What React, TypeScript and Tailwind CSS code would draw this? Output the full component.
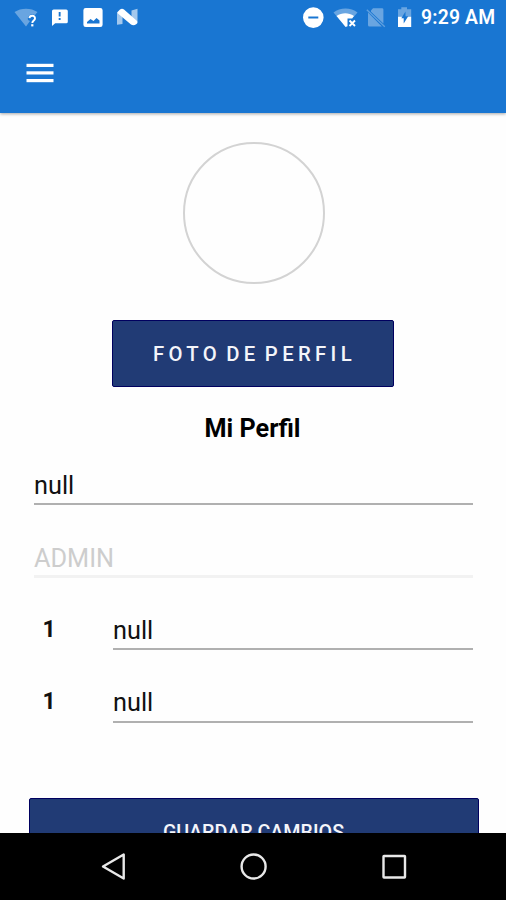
import React from 'react';

interface FieldProps {
  value: string;
  label?: string;
  disabled?: boolean;
}

const Field: React.FC<FieldProps> = ({ value, label, disabled }) => {
  return (
    <div className="flex h-[72.5px] w-full">
      {label && (
        <span className="w-[79px] shrink-0 pl-[9px] pt-[12.6px] text-[23px] leading-[28px] font-bold text-[#111]">
          {label}
        </span>
      )}
      <div
        className={
          disabled
            ? 'h-[47px] flex-1 border-b-[3px] border-[#f2f2f2] pl-[0.5px] pt-[13px] text-[25.3px] leading-[30px] text-[#cdcdcd]'
            : 'h-[47px] flex-1 border-b-2 border-[#b0b0b0] pl-[0.5px] pt-[12.9px] text-[25.3px] leading-[30px] text-[#111]'
        }
      >
        {value}
      </div>
    </div>
  );
};

const StatusBar: React.FC = () => {
  return (
    <div className="flex h-[36px] items-center justify-between">
      <svg width="146" height="36" viewBox="0 0 146 36" fill="#fff">
        <path d="M14.5 12C21 7.500 31 7.500 37.500 12L35 15C31 13 27 16 28 20L30 21L26 26.500Z" opacity=".35" />
        <path
          d="M29.400 18.200C29.800 14.800 35.200 15 35 18.600C34.900 20.400 32.300 20.700 32.300 23"
          fill="none"
          stroke="#fff"
          strokeWidth="1.900"
        />
        <rect x="31.200" y="24.200" width="2.200" height="2.200" />
        <path
          fillRule="evenodd"
          d="M53.700 9.500H66.200Q67.800 9.500 67.800 11.100V21.700Q67.800 23.200 66.200 23.200H55.200L52 26V11.100Q52 9.500 53.700 9.500ZM58.700 12V16.400H60.600V12ZM58.700 18V19.900H60.600V18Z"
        />
        <path
          fillRule="evenodd"
          d="M85.700 8H100.300Q102.600 8 102.600 10.300V24.700Q102.600 27 100.300 27H85.700Q83.400 27 83.400 24.700V10.300Q83.400 8 85.700 8ZM87 23.500H99.500V20.500L96.500 18L93.500 21L90.500 19L87 22Z"
        />
        <path d="M117 12V24.800L122.500 24V15ZM137.500 8.800L131.500 10.500V19L137.500 22Z" opacity=".6" />
        <path d="M117.500 12L120 9.500Q122 8 124 9.500L136.500 20.500Q138.500 22.500 136.500 24Q133.500 26.300 131 24.500L118.500 14Q117 12.800 117.500 12Z" />
      </svg>
      <div className="flex items-center pr-[11px]">
        <svg width="114" height="36" viewBox="300 0 114 36" fill="#fff">
          <path
            fillRule="evenodd"
            d="M313.300 7.300a10.300 10.300 0 1 0 0 20.600a10.300 10.300 0 1 0 0-20.600ZM308.300 16.400H318.300V18.500H308.300Z"
          />
          <path d="M333.500 12.500C340 7 351 7 357.500 12.500L354 16.500H337Z" opacity=".35" />
          <path d="M336.500 16C342 12.200 348.500 12.200 354 16L352.200 18.400H347.500V26.200L345.600 27Z" />
          <path d="M349.500 20.500L355 26M355 20.500L349.500 26" stroke="#fff" strokeWidth="1.900" />
          <path d="M371 10.500L373 8.200H382Q383.400 8.200 383.400 9.600V23.500L371 11.800ZM368 12.500L381.800 26.500H369.500Q368 26.500 368 25Z" opacity=".35" />
          <path d="M366.800 9.800L384.800 26.700" stroke="#fff" strokeWidth="1.400" opacity=".3" />
          <path d="M401.300 7.300H407V9.200H411.200V17H398V9.200H401.300Z" opacity=".35" />
          <path d="M398 16.800H411.200V27H398Z" />
          <path d="M405.500 11.500V16.200H408.200L403.700 23.500V18.300H401.300Z" fill="#1976d2" />
        </svg>
        <span className="ml-[7px] w-[74px] whitespace-nowrap text-[19.3px] leading-[38px] font-semibold tracking-[0.2px] text-white">
          9:29 AM
        </span>
      </div>
    </div>
  );
};

const App: React.FC = () => {
  return (
    <main className="flex h-[900px] w-[506px] flex-col overflow-hidden bg-[#fefefe] font-['Roboto',sans-serif]">
      <header className="z-10 h-[113px] shrink-0 bg-[#1976d2] shadow-[0_1px_3px_rgba(0,0,0,0.35)]">
        <StatusBar />
        <button className="ml-[26px] mt-[27px] block">
          <svg width="28" height="20" viewBox="0 0 28 20" fill="#fff">
            <rect x="0.500" y="0.800" width="27" height="3.200" />
            <rect x="0.500" y="8.300" width="27" height="3.200" />
            <rect x="0.500" y="16" width="27" height="3.200" />
          </svg>
        </button>
      </header>

      <section className="flex min-h-0 flex-1 flex-col items-center overflow-hidden">
        <div className="ml-px mt-[29px] h-[142px] w-[142px] shrink-0 rounded-full border-2 border-[#d3d3d3]" />
        <button className="mt-[36px] h-[67px] w-[282px] shrink-0 rounded-[2px] border border-[#00005f] bg-[#213b75] pl-[3px] pt-[2px] text-[20.3px] font-medium tracking-[4.35px] [word-spacing:-4.2px] text-[#f4f5fa]">
          FOTO DE PERFIL
        </button>
        <h1 className="mt-[27px] mr-px h-[44px] shrink-0 text-[25.2px] leading-[30px] font-bold text-black">Mi Perfil</h1>

        <div className="flex w-[439px] shrink-0 flex-col">
          <Field value="null" />
          <Field value="ADMIN" disabled />
          <Field value="null" label="1" />
          <Field value="null" label="1" />
        </div>

        <button className="ml-px mt-[50px] h-[67px] w-[450px] shrink-0 rounded-[2px] border border-[#00005f] bg-[#213b75] pt-[3px] text-[19.7px] font-medium text-[#f4f5fa]">
          GUARDAR CAMBIOS
        </button>
      </section>

      <nav className="flex h-[67px] shrink-0 items-center bg-black">
        <svg width="506" height="67" viewBox="0 833 506 67" fill="none" stroke="#e8e8e8" strokeWidth="2.400">
          <path d="M103 866.500L123.700 854.500V878.500Z" strokeLinejoin="round" />
          <circle cx="253.600" cy="866.500" r="12" />
          <rect x="383.500" y="856" width="21.500" height="21.500" rx="0.500" />
        </svg>
      </nav>
    </main>
  );
};

export default App;
